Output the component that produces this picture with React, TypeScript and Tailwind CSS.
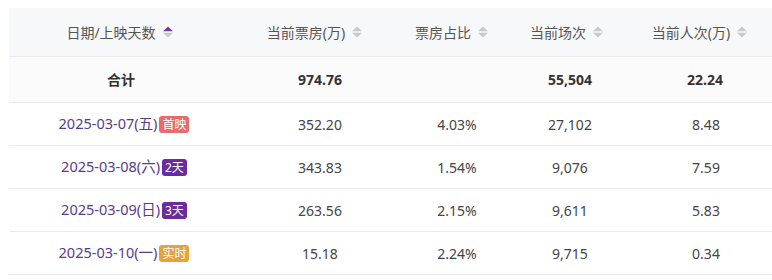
const font = { fontFamily: '"Noto Sans", "Noto Sans CJK SC", sans-serif' };

type Row = {
  date: string;
  tag: string;
  tagClass: string;
  box: string;
  share: string;
  shows: string;
  people: string;
};

const rows: Row[] = [
  { date: '2025-03-07(五)', tag: '首映', tagClass: 'bg-[#ea6b6b]', box: '352.20', share: '4.03%', shows: '27,102', people: '8.48' },
  { date: '2025-03-08(六)', tag: '2天', tagClass: 'bg-[#6a2c9c]', box: '343.83', share: '1.54%', shows: '9,076', people: '7.59' },
  { date: '2025-03-09(日)', tag: '3天', tagClass: 'bg-[#6a2c9c]', box: '263.56', share: '2.15%', shows: '9,611', people: '5.83' },
  { date: '2025-03-10(一)', tag: '实时', tagClass: 'bg-[#e6a23c]', box: '15.18', share: '2.24%', shows: '9,715', people: '0.34' },
];

const cols = ['w-[224px]', 'w-[170px]', 'w-[108px]', 'w-[118px]', 'w-[152px]'];

function SortIcon({ active }: { active?: boolean }) {
  return (
    <svg width="12" height="14" viewBox="0 0 12 14" className="ml-[6px] shrink-0">
      <path d="M6 1.5 L11 6.2 H1 Z" fill={active ? '#7a3a9e' : '#c7c9ce'} />
      <path d="M6 12.5 L11 7.8 H1 Z" fill="#c7c9ce" />
    </svg>
  );
}

function HeadCell({ label, w, active, shift }: { label: string; w: string; active?: boolean; shift?: string }) {
  return (
    <div className={`${w} shrink-0 flex items-center justify-center ${shift ?? ''}`}>
      <span className="text-[14px] text-[#555]">{label}</span>
      <SortIcon active={active} />
    </div>
  );
}

export default function App() {
  return (
    <div className="w-[772px] h-[280px] overflow-hidden bg-white pt-2 pl-[9px]" style={font}>
      <div className="w-[772px]">
        <div className="flex h-[49px] bg-[#f7f8fa] border-b border-[#e9ebef]">
          <HeadCell label="日期/上映天数" w={cols[0]} active shift="pr-[2px]" />
          <HeadCell label="当前票房(万)" w={cols[1]} shift="pr-[6px]" />
          <HeadCell label="票房占比" w={cols[2]} shift="pr-[10px]" />
          <HeadCell label="当前场次" w={cols[3]} shift="pr-[6px]" />
          <HeadCell label="当前人次(万)" w={cols[4]} shift="pr-[10px]" />
        </div>
        <div className="flex h-[46px] items-center bg-[#fbfbfc] border-b border-[#e9ebef] text-[14px] font-bold text-[#333]">
          <div className={`${cols[0]} text-center`}>合计</div>
          <div className={`${cols[1]} text-center pl-[4px]`}>974.76</div>
          <div className={`${cols[2]} text-center`}></div>
          <div className={`${cols[3]} text-center`}>55,504</div>
          <div className={`${cols[4]} text-center`}>22.24</div>
        </div>
        {rows.map((r) => (
          <div key={r.date} className="flex h-[43px] items-center border-b border-[#e9ebef] text-[14px] text-[#444]">
            <div className={`${cols[0]} flex items-center justify-center pl-[6px]`}>
              <span className="text-[#5a3a8c] text-[14.5px]">{r.date}</span>
              <span className={`ml-[2px] h-[17px] px-[3px] rounded-[3px] text-white text-[12px] leading-[17px] ${r.tagClass}`}>
                {r.tag}
              </span>
            </div>
            <div className={`${cols[1]} text-center pl-[4px]`}>{r.box}</div>
            <div className={`${cols[2]} text-center`}>{r.share}</div>
            <div className={`${cols[3]} text-center`}>{r.shows}</div>
            <div className={`${cols[4]} text-center pl-[2px]`}>{r.people}</div>
          </div>
        ))}
      </div>
    </div>
  );
}
